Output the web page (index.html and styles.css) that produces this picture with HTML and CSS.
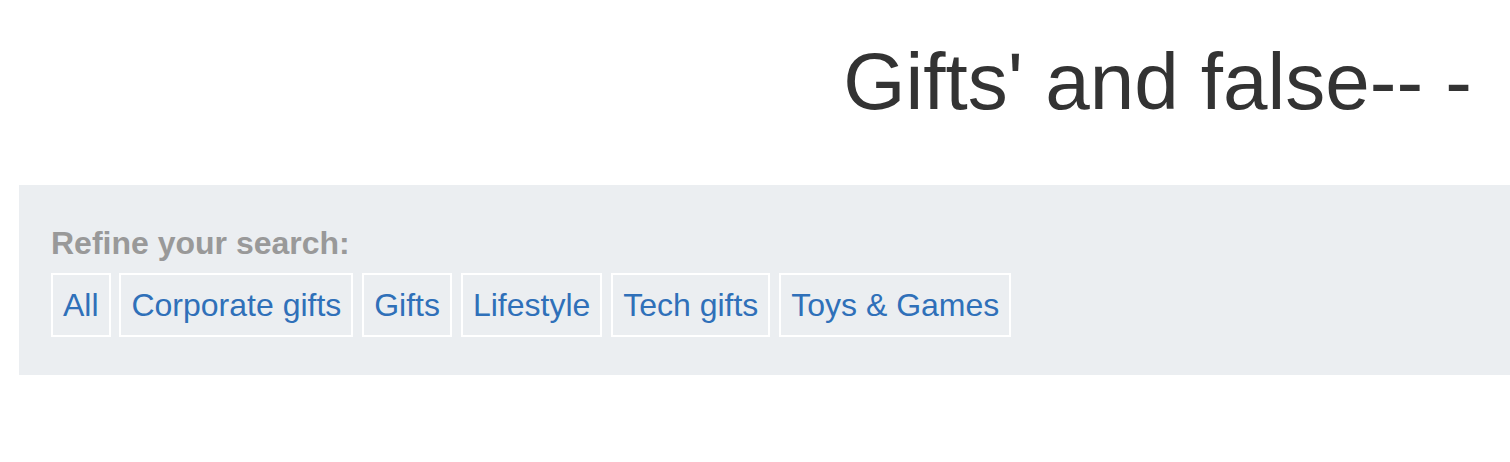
FILE: index.html
```html
<!DOCTYPE html>
<html>
<head>
<meta charset="utf-8">
<link rel="stylesheet" href="styles.css">
</head>
<body>
<div class="page">
  <header class="head">
    <h1 class="title">Gifts' and false-- -</h1>
  </header>
  <section class="refine">
    <div class="refine-label">Refine your search:</div>
    <ul class="tags">
      <li><a class="tag" href="#">All</a></li>
      <li><a class="tag" href="#">Corporate gifts</a></li>
      <li><a class="tag" href="#">Gifts</a></li>
      <li><a class="tag" href="#">Lifestyle</a></li>
      <li><a class="tag" href="#">Tech gifts</a></li>
      <li><a class="tag" href="#">Toys &amp; Games</a></li>
    </ul>
  </section>
</div>
</body>
</html>
```
FILE: styles.css
```css
html, body {
  margin: 0;
  padding: 0;
  background: #ffffff;
  font-family: "Liberation Sans", Arial, sans-serif;
}
.page {
  padding-left: 19px;
}
.head {
  display: flex;
  justify-content: flex-end;
  padding: 32px 38px 0 0;
  height: 185px;
  box-sizing: border-box;
}
.title {
  margin: 0;
  font-size: 80px;
  font-weight: normal;
  line-height: 100px;
  color: #333333;
}
.refine {
  background: #ebeef1;
  padding: 38px 32px 38px 32px;
}
.refine-label {
  font-size: 32px;
  font-weight: bold;
  color: #999999;
  line-height: 40px;
  margin-bottom: 10px;
}
.tags {
  list-style: none;
  margin: 0;
  padding: 0;
  display: flex;
  gap: 8.9px;
}
.tag {
  display: block;
  border: 2px solid #ffffff;
  padding: 10px 10px;
  font-size: 32px;
  line-height: 40px;
  color: #2f70b9;
  text-decoration: none;
}
```
